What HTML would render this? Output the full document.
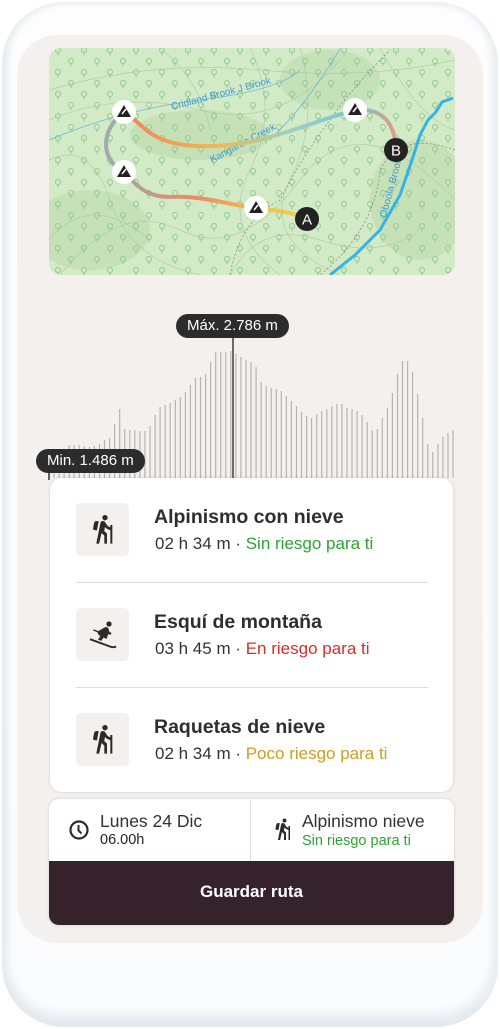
<!DOCTYPE html>
<html><head><meta charset="utf-8"><style>
*{margin:0;padding:0;box-sizing:border-box}
body{width:500px;height:1029px;background:#fff;font-family:"Liberation Sans",sans-serif;position:relative;overflow:hidden;color:#2b2b2b}
.phone{position:absolute;left:2px;top:2px;width:496px;height:1025px;border-radius:62px;background:linear-gradient(#fdfdfd,#fbfcfd);box-shadow:inset 4px 0 8px #e3ebef,inset -4px 0 8px #e8eef1,inset 0 -10px 14px #dde5ec}
.screen{position:absolute;left:17px;top:35px;width:466px;height:908px;border-radius:40px;background:#f4f0ed}
.map{position:absolute;left:49px;top:48px;width:406px;height:227px;border-radius:12px;overflow:hidden;background:#d3eac6}
.lbl{position:absolute;background:#2c2c2c;color:#fff;font-size:15px;height:24px;line-height:24px;border-radius:12px;padding:0 11px;font-weight:500}
.card{position:absolute;left:50px;top:478px;width:403px;height:314px;background:#fff;border-radius:12px;box-shadow:0 0 3px rgba(0,0,0,.15)}
.row{position:absolute;left:26px;width:352px;height:105px}
.ib{position:absolute;left:0;top:25px;width:53px;height:53px;background:#f4f0ed;border-radius:5px}
.ib svg{position:absolute;left:11px;top:10px}
.t{position:absolute;left:78px;top:28px;font-size:19.5px;font-weight:bold;color:#2e2e2e}
.s{position:absolute;left:79px;top:56px;font-size:17px;color:#333}
.div{position:absolute;left:26px;width:352px;height:1px;background:#dcdcdc}
.bot{position:absolute;left:49px;top:799px;width:405px;height:126px;border-radius:10px;overflow:hidden;background:#fff;box-shadow:0 0 3px rgba(0,0,0,.15)}
.btn{position:absolute;left:0;top:62px;width:405px;height:64px;background:#35222b;color:#fff;font-size:17px;font-weight:bold;text-align:center;line-height:62px}
</style></head><body>
<div class="phone"></div>
<div class="screen"></div>
<div class="map">
<svg width="406" height="227" viewBox="49 48 406 227">
<defs>
<linearGradient id="g1" x1="0" x2="1"><stop offset="0" stop-color="#a8a3a5"/><stop offset=".4" stop-color="#ec8a5e"/><stop offset=".75" stop-color="#f0c24e"/><stop offset="1" stop-color="#ecd155"/></linearGradient>
<linearGradient id="g2" x1="0" x2="1"><stop offset="0" stop-color="#ee8460"/><stop offset=".35" stop-color="#f1b84e"/><stop offset=".6" stop-color="#9fd0c0"/><stop offset=".85" stop-color="#75c3dd"/><stop offset="1" stop-color="#e59a85"/></linearGradient>
<pattern id="tr" width="26" height="22" patternUnits="userSpaceOnUse"><g fill="none" stroke="#8fca8c" stroke-width="1"><circle cx="6" cy="6" r="2.5"/><path d="M6 8.5v3"/><circle cx="19" cy="17" r="2.5"/><path d="M19 19.5v2.5"/></g></pattern>
</defs>
<g fill="#c4e0b6" opacity=".9"><ellipse cx="90" cy="230" rx="60" ry="40"/><ellipse cx="200" cy="135" rx="70" ry="25"/><ellipse cx="420" cy="200" rx="50" ry="60"/><ellipse cx="330" cy="80" rx="50" ry="30"/></g>
<rect x="49" y="48" width="406" height="227" fill="url(#tr)"/>
<g fill="none" stroke="#a9c7a0" stroke-width=".7" opacity=".8">
<path d="M49 90 Q150 60 260 70 T455 60"/><path d="M49 120 Q120 90 200 110 T340 60"/><path d="M60 275 Q120 200 180 230 T300 180 T455 200"/><path d="M49 240 Q90 190 150 240"/><path d="M230 275 Q260 220 320 240 T420 230"/><path d="M300 48 Q320 120 290 180 T340 275"/><path d="M250 48 Q280 110 250 170 T280 275"/><path d="M380 48 Q420 120 455 130"/><path d="M49 160 Q90 140 110 200 T200 275"/><path d="M160 48 Q200 80 210 130"/>
</g>
<path d="M49 140 Q120 110 200 100 T300 70" fill="none" stroke="#6fb6dd" stroke-width=".8"/>
<path d="M270 140 Q300 110 320 80 T340 48" fill="none" stroke="#6fb6dd" stroke-width=".8"/>
<path d="M453 98 L442 102 L436 112 L428 120 L420 135 L412 160 L400 195 L380 230 L355 255 L330 275" fill="none" stroke="#36b2e8" stroke-width="3"/>
<path d="M455 150 Q400 130 380 170 Q375 230 320 275" fill="none" stroke="#8a8a8a" stroke-width=".8" stroke-dasharray="2 2"/>
<path d="M230 275 Q240 220 280 200 Q300 160 330 120 Q350 90 390 50" fill="none" stroke="#8a8a8a" stroke-width=".8" stroke-dasharray="2 2"/>
<text x="172" y="110" font-size="10" fill="#3f9bd6" transform="rotate(-15 172 110)" font-family="Liberation Sans">Cridland Brook  J Brook</text>
<text x="212" y="163" font-size="10" fill="#3f9bd6" transform="rotate(-28 212 163)" font-family="Liberation Sans">Kangaroo Creek</text>
<text x="386" y="218" font-size="10" fill="#3f9bd6" transform="rotate(-75 386 218)" font-family="Liberation Sans">Oboola Brook</text>
<path d="M307 219 C290 210 265 210 256 208 C230 205 200 195 170 197 C150 197 140 190 124 172" fill="none" stroke="url(#g1)" stroke-width="4" stroke-linecap="round"/>
<path d="M124 172 C100 160 100 130 124 112" fill="none" stroke="#9fa9b0" stroke-width="4"/>
<path d="M124 112 C145 125 150 145 200 146 C260 148 300 125 355 110 C380 108 395 120 396 150" fill="none" stroke="url(#g2)" stroke-width="4"/>
<g id="mk"><circle r="12" fill="#fff"/><path d="M0 -7 L7 5 L-7 5Z" fill="#222"/><path d="M-2 2 L2 -3" stroke="#fff" stroke-width="1.5"/></g>
<use href="#mk" x="124" y="112"/><use href="#mk" x="124" y="172"/><use href="#mk" x="256" y="208"/><use href="#mk" x="355" y="110"/>
<circle cx="307" cy="219" r="12" fill="#222"/><text x="307" y="224.5" font-size="15" fill="#fff" text-anchor="middle" font-family="Liberation Sans">A</text>
<circle cx="396" cy="150" r="12" fill="#222"/><text x="396" y="155.5" font-size="15" fill="#fff" text-anchor="middle" font-family="Liberation Sans">B</text>
</svg>
</div>
<svg id="bars" style="position:absolute;left:0;top:0" width="500" height="540"></svg>
<div class="lbl" style="left:176px;top:314px">Máx. 2.786 m</div>
<div class="lbl" style="left:36px;top:449px">Min. 1.486 m</div>
<div class="card">
<div class="row" style="top:0"><div class="ib"><svg width="32" height="32" viewBox="0 0 24 24"><path fill="#2b2b2b" d="M13.5 5.5c1.09 0 2-.9 2-2s-.91-2-2-2-2 .9-2 2 .9 2 2 2zM17.5 10.78c-1.23-.37-2.22-1.17-2.8-2.18l-1-1.6c-.41-.65-1.11-1-1.84-1-.78 0-1.59.5-1.78 1.44S7 23 7 23h2.1l1.8-8 2.1 2v6h2v-7.5l-2.1-2 .6-3c1 1.15 2.41 2.01 4 2.34V23H19V9h-1.5v1.78zM7.43 13.13l-2.12-.41c-.54-.11-.9-.63-.79-1.17l.76-3.93c.21-1.08 1.26-1.79 2.34-1.58l1.16.23-1.35 6.86z"/></svg></div><div class="t">Alpinismo con nieve</div><div class="s">02 h 34 m · <span style="color:#2ea234">Sin riesgo para ti</span></div></div>
<div class="div" style="top:104px"></div>
<div class="row" style="top:105px"><div class="ib"><svg width="32" height="32" viewBox="0 0 24 24"><circle cx="16.5" cy="4.5" r="2" fill="#2b2b2b"/><path fill="#2b2b2b" d="M9 9.5l4.5-2.6c1-.5 2.3 0 2.6 1.1l.8 2.6 1.5.5-.6 1.5-2-.4-1 3.5-2.5-1-1.5 2.5-2.6-1 1.8-2.5-1.6-1.5c-.8-.8-.6-2.1.6-2.7zM5 8.5l6 2.2-.4 1L4.6 9.5zM2 16.6l.5-1.4 15.5 5.7c1.3.4 2.6.3 3.6-.2l.5 1.3c-1.3.6-3 .8-4.6.2z"/></svg></div><div class="t">Esquí de montaña</div><div class="s">03 h 45 m · <span style="color:#d0312d">En riesgo para ti</span></div></div>
<div class="div" style="top:209px"></div>
<div class="row" style="top:210px"><div class="ib"><svg width="32" height="32" viewBox="0 0 24 24"><path fill="#2b2b2b" d="M13.5 5.5c1.09 0 2-.9 2-2s-.91-2-2-2-2 .9-2 2 .9 2 2 2zM17.5 10.78c-1.23-.37-2.22-1.17-2.8-2.18l-1-1.6c-.41-.65-1.11-1-1.84-1-.78 0-1.59.5-1.78 1.44S7 23 7 23h2.1l1.8-8 2.1 2v6h2v-7.5l-2.1-2 .6-3c1 1.15 2.41 2.01 4 2.34V23H19V9h-1.5v1.78zM7.43 13.13l-2.12-.41c-.54-.11-.9-.63-.79-1.17l.76-3.93c.21-1.08 1.26-1.79 2.34-1.58l1.16.23-1.35 6.86z"/></svg></div><div class="t">Raquetas de nieve</div><div class="s">02 h 34 m · <span style="color:#c9a020">Poco riesgo para ti</span></div></div>
</div>
<div class="bot">
<svg style="position:absolute;left:19px;top:20px" width="22" height="22" viewBox="0 0 22 22"><circle cx="11" cy="11" r="8.5" fill="none" stroke="#2b2b2b" stroke-width="2.2"/><path d="M10.5 6v5.5l3 3" fill="none" stroke="#2b2b2b" stroke-width="2"/></svg>
<div style="position:absolute;left:51px;top:12px;font-size:17.5px;color:#333">Lunes 24 Dic</div>
<div style="position:absolute;left:51px;top:33px;font-size:14.5px;color:#222">06.00h</div>
<div style="position:absolute;left:201px;top:0;width:1px;height:62px;background:#ddd"></div>
<svg style="position:absolute;left:222px;top:17px" width="24" height="26" viewBox="0 0 24 24"><path fill="#2b2b2b" d="M13.5 5.5c1.09 0 2-.9 2-2s-.91-2-2-2-2 .9-2 2 .9 2 2 2zM17.5 10.78c-1.23-.37-2.22-1.17-2.8-2.18l-1-1.6c-.41-.65-1.11-1-1.84-1-.78 0-1.59.5-1.78 1.44S7 23 7 23h2.1l1.8-8 2.1 2v6h2v-7.5l-2.1-2 .6-3c1 1.15 2.41 2.01 4 2.34V23H19V9h-1.5v1.78zM7.43 13.13l-2.12-.41c-.54-.11-.9-.63-.79-1.17l.76-3.93c.21-1.08 1.26-1.79 2.34-1.58l1.16.23-1.35 6.86z"/></svg>
<div style="position:absolute;left:253px;top:12px;font-size:17.5px;color:#333">Alpinismo nieve</div>
<div style="position:absolute;left:253px;top:34px;font-size:14.5px;color:#2ea234">Sin riesgo para ti</div>
<div class="btn">Guardar ruta</div>
</div>
<script>
var k=[[49,462],[70,443],[90,446],[110,440],[120,410],[125,432],[148,433],[158,410],[170,405],[183,398],[195,380],[205,375],[215,352],[225,352],[230,350],[240,357],[255,364],[262,385],[280,390],[295,405],[310,417],[320,410],[340,400],[345,405],[360,410],[375,432],[390,400],[400,362],[410,362],[420,405],[430,457],[445,435],[455,430]];
function h(x){for(var i=0;i<k.length-1;i++){if(x>=k[i][0]&&x<=k[i+1][0]){var t=(x-k[i][0])/(k[i+1][0]-k[i][0]);return k[i][1]+t*(k[i+1][1]-k[i][1]);}}return 460;}
var s='';for(var x=49;x<=456;x+=5.05){var y=h(x)+((Math.round(x)*7)%5-2);s+='<line x1="'+x.toFixed(1)+'" x2="'+x.toFixed(1)+'" y1="'+y.toFixed(0)+'" y2="478" stroke="#b9b3b0" stroke-width="1.2"/>';}
s+='<line x1="233" x2="233" y1="338" y2="478" stroke="#6d6b6a" stroke-width="2"/><line x1="49" x2="49" y1="470" y2="480" stroke="#333" stroke-width="1.5"/>';
document.getElementById('bars').innerHTML=s;
</script>
</body></html>
